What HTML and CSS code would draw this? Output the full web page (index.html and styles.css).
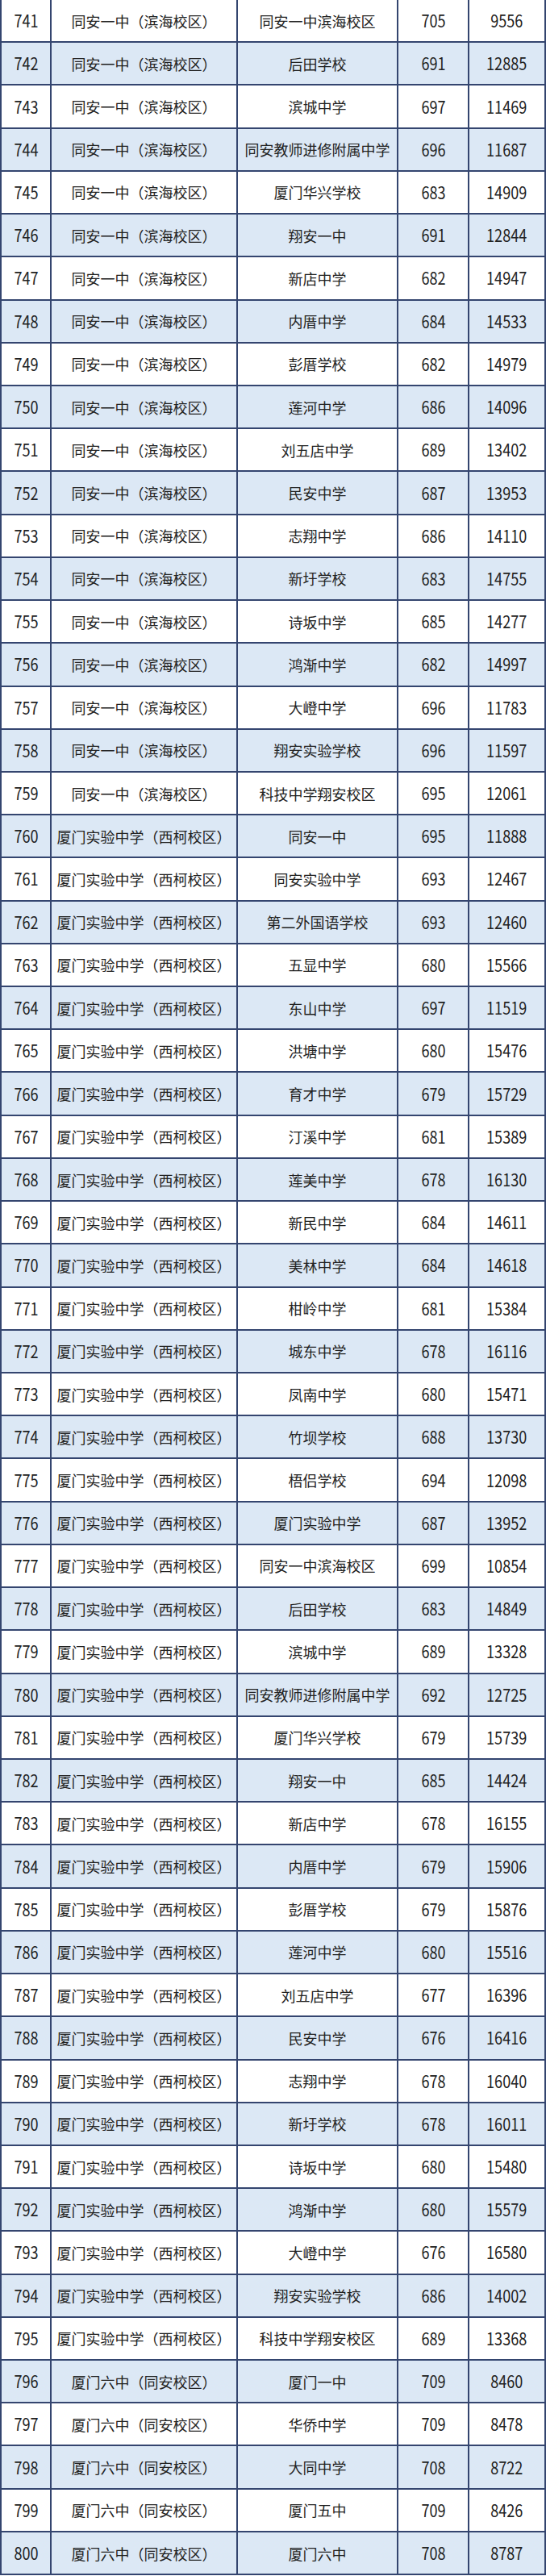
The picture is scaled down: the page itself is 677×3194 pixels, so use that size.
FILE: index.html
```html
<!DOCTYPE html>
<html lang="zh-CN">
<head>
<meta charset="utf-8">
<title>录取表</title>
<link rel="stylesheet" href="styles.css">
</head>
<body>
<div class="table">
<div class="row"><div class="c n"><span>741</span></div><div class="c">同安一中（滨海校区）</div><div class="c">同安一中滨海校区</div><div class="c n"><span>705</span></div><div class="c n"><span>9556</span></div></div>
<div class="row"><div class="c n"><span>742</span></div><div class="c">同安一中（滨海校区）</div><div class="c">后田学校</div><div class="c n"><span>691</span></div><div class="c n"><span>12885</span></div></div>
<div class="row"><div class="c n"><span>743</span></div><div class="c">同安一中（滨海校区）</div><div class="c">滨城中学</div><div class="c n"><span>697</span></div><div class="c n"><span>11469</span></div></div>
<div class="row"><div class="c n"><span>744</span></div><div class="c">同安一中（滨海校区）</div><div class="c">同安教师进修附属中学</div><div class="c n"><span>696</span></div><div class="c n"><span>11687</span></div></div>
<div class="row"><div class="c n"><span>745</span></div><div class="c">同安一中（滨海校区）</div><div class="c">厦门华兴学校</div><div class="c n"><span>683</span></div><div class="c n"><span>14909</span></div></div>
<div class="row"><div class="c n"><span>746</span></div><div class="c">同安一中（滨海校区）</div><div class="c">翔安一中</div><div class="c n"><span>691</span></div><div class="c n"><span>12844</span></div></div>
<div class="row"><div class="c n"><span>747</span></div><div class="c">同安一中（滨海校区）</div><div class="c">新店中学</div><div class="c n"><span>682</span></div><div class="c n"><span>14947</span></div></div>
<div class="row"><div class="c n"><span>748</span></div><div class="c">同安一中（滨海校区）</div><div class="c">内厝中学</div><div class="c n"><span>684</span></div><div class="c n"><span>14533</span></div></div>
<div class="row"><div class="c n"><span>749</span></div><div class="c">同安一中（滨海校区）</div><div class="c">彭厝学校</div><div class="c n"><span>682</span></div><div class="c n"><span>14979</span></div></div>
<div class="row"><div class="c n"><span>750</span></div><div class="c">同安一中（滨海校区）</div><div class="c">莲河中学</div><div class="c n"><span>686</span></div><div class="c n"><span>14096</span></div></div>
<div class="row"><div class="c n"><span>751</span></div><div class="c">同安一中（滨海校区）</div><div class="c">刘五店中学</div><div class="c n"><span>689</span></div><div class="c n"><span>13402</span></div></div>
<div class="row"><div class="c n"><span>752</span></div><div class="c">同安一中（滨海校区）</div><div class="c">民安中学</div><div class="c n"><span>687</span></div><div class="c n"><span>13953</span></div></div>
<div class="row"><div class="c n"><span>753</span></div><div class="c">同安一中（滨海校区）</div><div class="c">志翔中学</div><div class="c n"><span>686</span></div><div class="c n"><span>14110</span></div></div>
<div class="row"><div class="c n"><span>754</span></div><div class="c">同安一中（滨海校区）</div><div class="c">新圩学校</div><div class="c n"><span>683</span></div><div class="c n"><span>14755</span></div></div>
<div class="row"><div class="c n"><span>755</span></div><div class="c">同安一中（滨海校区）</div><div class="c">诗坂中学</div><div class="c n"><span>685</span></div><div class="c n"><span>14277</span></div></div>
<div class="row"><div class="c n"><span>756</span></div><div class="c">同安一中（滨海校区）</div><div class="c">鸿渐中学</div><div class="c n"><span>682</span></div><div class="c n"><span>14997</span></div></div>
<div class="row"><div class="c n"><span>757</span></div><div class="c">同安一中（滨海校区）</div><div class="c">大嶝中学</div><div class="c n"><span>696</span></div><div class="c n"><span>11783</span></div></div>
<div class="row"><div class="c n"><span>758</span></div><div class="c">同安一中（滨海校区）</div><div class="c">翔安实验学校</div><div class="c n"><span>696</span></div><div class="c n"><span>11597</span></div></div>
<div class="row"><div class="c n"><span>759</span></div><div class="c">同安一中（滨海校区）</div><div class="c">科技中学翔安校区</div><div class="c n"><span>695</span></div><div class="c n"><span>12061</span></div></div>
<div class="row"><div class="c n"><span>760</span></div><div class="c">厦门实验中学（西柯校区）</div><div class="c">同安一中</div><div class="c n"><span>695</span></div><div class="c n"><span>11888</span></div></div>
<div class="row"><div class="c n"><span>761</span></div><div class="c">厦门实验中学（西柯校区）</div><div class="c">同安实验中学</div><div class="c n"><span>693</span></div><div class="c n"><span>12467</span></div></div>
<div class="row"><div class="c n"><span>762</span></div><div class="c">厦门实验中学（西柯校区）</div><div class="c">第二外国语学校</div><div class="c n"><span>693</span></div><div class="c n"><span>12460</span></div></div>
<div class="row"><div class="c n"><span>763</span></div><div class="c">厦门实验中学（西柯校区）</div><div class="c">五显中学</div><div class="c n"><span>680</span></div><div class="c n"><span>15566</span></div></div>
<div class="row"><div class="c n"><span>764</span></div><div class="c">厦门实验中学（西柯校区）</div><div class="c">东山中学</div><div class="c n"><span>697</span></div><div class="c n"><span>11519</span></div></div>
<div class="row"><div class="c n"><span>765</span></div><div class="c">厦门实验中学（西柯校区）</div><div class="c">洪塘中学</div><div class="c n"><span>680</span></div><div class="c n"><span>15476</span></div></div>
<div class="row"><div class="c n"><span>766</span></div><div class="c">厦门实验中学（西柯校区）</div><div class="c">育才中学</div><div class="c n"><span>679</span></div><div class="c n"><span>15729</span></div></div>
<div class="row"><div class="c n"><span>767</span></div><div class="c">厦门实验中学（西柯校区）</div><div class="c">汀溪中学</div><div class="c n"><span>681</span></div><div class="c n"><span>15389</span></div></div>
<div class="row"><div class="c n"><span>768</span></div><div class="c">厦门实验中学（西柯校区）</div><div class="c">莲美中学</div><div class="c n"><span>678</span></div><div class="c n"><span>16130</span></div></div>
<div class="row"><div class="c n"><span>769</span></div><div class="c">厦门实验中学（西柯校区）</div><div class="c">新民中学</div><div class="c n"><span>684</span></div><div class="c n"><span>14611</span></div></div>
<div class="row"><div class="c n"><span>770</span></div><div class="c">厦门实验中学（西柯校区）</div><div class="c">美林中学</div><div class="c n"><span>684</span></div><div class="c n"><span>14618</span></div></div>
<div class="row"><div class="c n"><span>771</span></div><div class="c">厦门实验中学（西柯校区）</div><div class="c">柑岭中学</div><div class="c n"><span>681</span></div><div class="c n"><span>15384</span></div></div>
<div class="row"><div class="c n"><span>772</span></div><div class="c">厦门实验中学（西柯校区）</div><div class="c">城东中学</div><div class="c n"><span>678</span></div><div class="c n"><span>16116</span></div></div>
<div class="row"><div class="c n"><span>773</span></div><div class="c">厦门实验中学（西柯校区）</div><div class="c">凤南中学</div><div class="c n"><span>680</span></div><div class="c n"><span>15471</span></div></div>
<div class="row"><div class="c n"><span>774</span></div><div class="c">厦门实验中学（西柯校区）</div><div class="c">竹坝学校</div><div class="c n"><span>688</span></div><div class="c n"><span>13730</span></div></div>
<div class="row"><div class="c n"><span>775</span></div><div class="c">厦门实验中学（西柯校区）</div><div class="c">梧侣学校</div><div class="c n"><span>694</span></div><div class="c n"><span>12098</span></div></div>
<div class="row"><div class="c n"><span>776</span></div><div class="c">厦门实验中学（西柯校区）</div><div class="c">厦门实验中学</div><div class="c n"><span>687</span></div><div class="c n"><span>13952</span></div></div>
<div class="row"><div class="c n"><span>777</span></div><div class="c">厦门实验中学（西柯校区）</div><div class="c">同安一中滨海校区</div><div class="c n"><span>699</span></div><div class="c n"><span>10854</span></div></div>
<div class="row"><div class="c n"><span>778</span></div><div class="c">厦门实验中学（西柯校区）</div><div class="c">后田学校</div><div class="c n"><span>683</span></div><div class="c n"><span>14849</span></div></div>
<div class="row"><div class="c n"><span>779</span></div><div class="c">厦门实验中学（西柯校区）</div><div class="c">滨城中学</div><div class="c n"><span>689</span></div><div class="c n"><span>13328</span></div></div>
<div class="row"><div class="c n"><span>780</span></div><div class="c">厦门实验中学（西柯校区）</div><div class="c">同安教师进修附属中学</div><div class="c n"><span>692</span></div><div class="c n"><span>12725</span></div></div>
<div class="row"><div class="c n"><span>781</span></div><div class="c">厦门实验中学（西柯校区）</div><div class="c">厦门华兴学校</div><div class="c n"><span>679</span></div><div class="c n"><span>15739</span></div></div>
<div class="row"><div class="c n"><span>782</span></div><div class="c">厦门实验中学（西柯校区）</div><div class="c">翔安一中</div><div class="c n"><span>685</span></div><div class="c n"><span>14424</span></div></div>
<div class="row"><div class="c n"><span>783</span></div><div class="c">厦门实验中学（西柯校区）</div><div class="c">新店中学</div><div class="c n"><span>678</span></div><div class="c n"><span>16155</span></div></div>
<div class="row"><div class="c n"><span>784</span></div><div class="c">厦门实验中学（西柯校区）</div><div class="c">内厝中学</div><div class="c n"><span>679</span></div><div class="c n"><span>15906</span></div></div>
<div class="row"><div class="c n"><span>785</span></div><div class="c">厦门实验中学（西柯校区）</div><div class="c">彭厝学校</div><div class="c n"><span>679</span></div><div class="c n"><span>15876</span></div></div>
<div class="row"><div class="c n"><span>786</span></div><div class="c">厦门实验中学（西柯校区）</div><div class="c">莲河中学</div><div class="c n"><span>680</span></div><div class="c n"><span>15516</span></div></div>
<div class="row"><div class="c n"><span>787</span></div><div class="c">厦门实验中学（西柯校区）</div><div class="c">刘五店中学</div><div class="c n"><span>677</span></div><div class="c n"><span>16396</span></div></div>
<div class="row"><div class="c n"><span>788</span></div><div class="c">厦门实验中学（西柯校区）</div><div class="c">民安中学</div><div class="c n"><span>676</span></div><div class="c n"><span>16416</span></div></div>
<div class="row"><div class="c n"><span>789</span></div><div class="c">厦门实验中学（西柯校区）</div><div class="c">志翔中学</div><div class="c n"><span>678</span></div><div class="c n"><span>16040</span></div></div>
<div class="row"><div class="c n"><span>790</span></div><div class="c">厦门实验中学（西柯校区）</div><div class="c">新圩学校</div><div class="c n"><span>678</span></div><div class="c n"><span>16011</span></div></div>
<div class="row"><div class="c n"><span>791</span></div><div class="c">厦门实验中学（西柯校区）</div><div class="c">诗坂中学</div><div class="c n"><span>680</span></div><div class="c n"><span>15480</span></div></div>
<div class="row"><div class="c n"><span>792</span></div><div class="c">厦门实验中学（西柯校区）</div><div class="c">鸿渐中学</div><div class="c n"><span>680</span></div><div class="c n"><span>15579</span></div></div>
<div class="row"><div class="c n"><span>793</span></div><div class="c">厦门实验中学（西柯校区）</div><div class="c">大嶝中学</div><div class="c n"><span>676</span></div><div class="c n"><span>16580</span></div></div>
<div class="row"><div class="c n"><span>794</span></div><div class="c">厦门实验中学（西柯校区）</div><div class="c">翔安实验学校</div><div class="c n"><span>686</span></div><div class="c n"><span>14002</span></div></div>
<div class="row"><div class="c n"><span>795</span></div><div class="c">厦门实验中学（西柯校区）</div><div class="c">科技中学翔安校区</div><div class="c n"><span>689</span></div><div class="c n"><span>13368</span></div></div>
<div class="row"><div class="c n"><span>796</span></div><div class="c">厦门六中（同安校区）</div><div class="c">厦门一中</div><div class="c n"><span>709</span></div><div class="c n"><span>8460</span></div></div>
<div class="row"><div class="c n"><span>797</span></div><div class="c">厦门六中（同安校区）</div><div class="c">华侨中学</div><div class="c n"><span>709</span></div><div class="c n"><span>8478</span></div></div>
<div class="row"><div class="c n"><span>798</span></div><div class="c">厦门六中（同安校区）</div><div class="c">大同中学</div><div class="c n"><span>708</span></div><div class="c n"><span>8722</span></div></div>
<div class="row"><div class="c n"><span>799</span></div><div class="c">厦门六中（同安校区）</div><div class="c">厦门五中</div><div class="c n"><span>709</span></div><div class="c n"><span>8426</span></div></div>
<div class="row"><div class="c n"><span>800</span></div><div class="c">厦门六中（同安校区）</div><div class="c">厦门六中</div><div class="c n"><span>708</span></div><div class="c n"><span>8787</span></div></div>
</div>
</body>
</html>
```
FILE: styles.css
```css
html, body {
  margin: 0;
  padding: 0;
  background: #ffffff;
}
.table {
  width: 677px;
  font-family: "Noto Sans CJK SC", "Noto Sans", sans-serif;
  font-size: 18px;
  color: #222222;
}
.row {
  display: grid;
  grid-template-columns: 64px 231px 199px 88px 95px;
  height: 53.2333px;
  box-sizing: border-box;
}
.row:nth-child(even) {
  background: #dce8f5;
}
.c {
  display: flex;
  align-items: center;
  justify-content: center;
  white-space: nowrap;
  box-sizing: border-box;
  border-right: 2px solid #34456f;
  border-bottom: 2px solid #34456f;
  line-height: 1;
}
.c:first-child {
  border-left: 2px solid #34456f;
}
.n span {
  display: inline-block;
  font-size: 21px;
  transform: scaleX(0.86);
}
```
